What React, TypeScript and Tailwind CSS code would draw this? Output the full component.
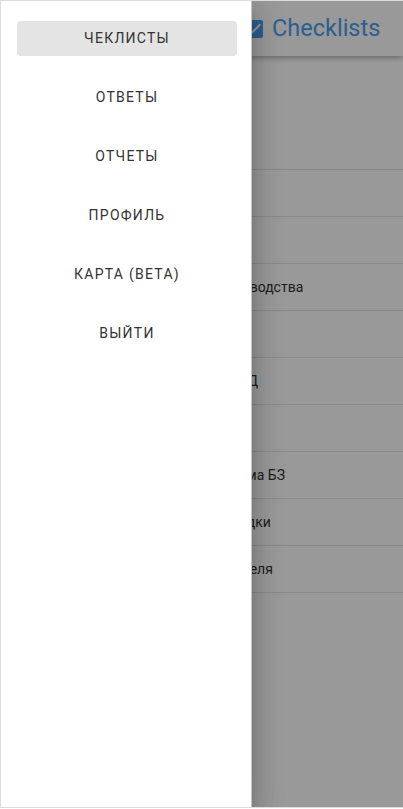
import { CheckSquare } from 'lucide-react'

const menu = ['Чеклисты', 'Ответы', 'Отчеты', 'Профиль', 'Карта (beta)', 'Выйти']

const checklists = [
  'Обход территории',
  'Проверка склада',
  'Охрана труда',
  'Ежедневный контроль производства',
  'Уборка офиса',
  'Контроль охраны труда в ЦОД',
  'Пожарная безопасность',
  'Ежеквартальная ИТ-программа БЗ',
  'Осмотр разгрузочной площадки',
  'Предрейсовый осмотр водителя',
]

function CheckboxIcon() {
  return (
    <svg viewBox="0 0 24 24" className="w-6 h-6 fill-[#4a9ef0]">
      <path d="M19 3H5c-1.11 0-2 .9-2 2v14c0 1.1.89 2 2 2h14c1.11 0 2-.9 2-2V5c0-1.1-.89-2-2-2zm-9 14l-5-5 1.41-1.41L10 14.17l7.59-7.59L19 8l-9 9z" />
    </svg>
  )
}

export default function App() {
  return (
    <div className="w-[403px] h-[808px] bg-white font-['Roboto',sans-serif]">
      <div className="relative h-[808px] overflow-hidden border-l border-t border-b border-[#dcdcdc]">
        {/* Page underneath */}
        <div className="h-full bg-white">
          <header className="h-[55px] flex items-center pl-[241px] gap-[6px] shadow-[0_2px_5px_rgba(0,0,0,0.3)] relative z-10">
            <CheckboxIcon />
            <span className="text-[23.5px] text-[#4a9ef0] leading-none">Checklists</span>
          </header>

          <div className="pt-[67px]">
            {checklists.map((name) => (
              <div key={name} className="h-[47px] border-b border-[#e4e4e4] flex items-center pl-3 gap-3">
                <div className="w-8 h-8 rounded-full bg-[#eee] flex items-center justify-center">
                  <CheckSquare className="w-4 h-4 text-[#888]" />
                </div>
                <span className="text-[14px] text-[#333] whitespace-nowrap">{name}</span>
              </div>
            ))}
          </div>
        </div>

        {/* Overlay */}
        <div className="absolute inset-0 bg-black/40 z-20" />

        {/* Drawer */}
        <nav className="absolute left-0 top-0 bottom-0 w-[251px] bg-white z-30 border-r border-[#c4c4c4] shadow-[0_8px_10px_-5px_rgba(0,0,0,0.2),0_16px_24px_2px_rgba(0,0,0,0.14),0_6px_30px_5px_rgba(0,0,0,0.12)]">
          <ul className="flex flex-col gap-6 pt-5 pl-4 pr-[14px]">
            {menu.map((item, i) => (
              <li
                key={item}
                className={
                  'h-[35px] flex items-center justify-center rounded text-[14px] uppercase tracking-[1.25px] text-[#333] ' +
                  (i === 0 ? 'bg-[#e4e4e4]' : '')
                }
              >
                {item}
              </li>
            ))}
          </ul>
        </nav>
      </div>
    </div>
  )
}
